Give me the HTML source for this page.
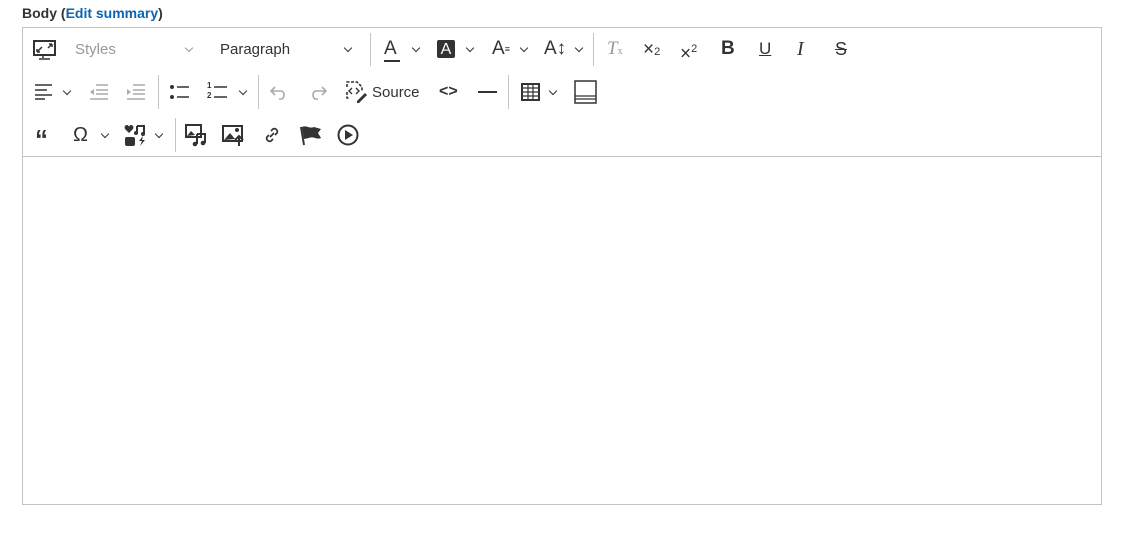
<!DOCTYPE html>
<html><head><style>
body{margin:0;background:#fff;width:1128px;height:534px;position:relative;font-family:"Liberation Sans",sans-serif;overflow:hidden}
.a{position:absolute}
.lbl{left:22px;top:5px;font-size:14px;font-weight:bold;color:#333}
.lbl span{color:#0b64b4}
.box{left:22px;top:27px;width:1078px;height:476px;border:1px solid #c4c4c4}
.tb{left:23px;top:28px;width:1078px;height:128px;border-bottom:1px solid #c4c4c4}
.sep{position:absolute;width:1px;background:#c4c4c4}
.t{position:absolute;font-size:15px;color:#333;line-height:18px}
svg.i{position:absolute}
.chev{position:absolute;width:5px;height:5px;border-right:1.3px solid #333;border-bottom:1.3px solid #333;transform:rotate(45deg)}
</style></head><body>
<div class="a lbl">Body (<span>Edit summary</span>)</div>
<div class="a box"></div>
<div class="a tb"></div>
<div class="sep" style="left:370px;top:33px;height:33px"></div>
<div class="sep" style="left:593px;top:33px;height:33px"></div>
<div class="sep" style="left:158px;top:75px;height:34px"></div>
<div class="sep" style="left:258px;top:75px;height:34px"></div>
<div class="sep" style="left:508px;top:75px;height:34px"></div>
<div class="sep" style="left:175px;top:118px;height:34px"></div>
<!-- row1 -->
<svg class="i" style="left:33px;top:40px" width="24" height="20" viewBox="0 0 24 20"><rect x="1" y="1" width="21" height="14" fill="none" stroke="#333" stroke-width="2"/><path d="M4 12l5-5M4 12v-3M4 12h3M19 4l-4 4M19 4v3M19 4h-3" stroke="#333" stroke-width="1.5" fill="none"/><path d="M10 16v2M6 19h11" stroke="#333" stroke-width="1.5"/></svg>
<div class="t" style="left:75px;top:41px;color:#999;font-size:15px">Styles</div>
<div class="chev" style="left:186px;top:45px;border-color:#999"></div>
<div class="t" style="left:220px;top:41px">Paragraph</div>
<div class="chev" style="left:345px;top:45px"></div>
<div class="t" style="left:384px;top:40px;font-size:19px">A</div><div class="a" style="left:384px;top:60px;width:16px;height:2px;background:#333"></div>
<div class="chev" style="left:413px;top:45px"></div>
<div class="a" style="left:437px;top:40px;width:18px;height:18px;background:#333;border-radius:2px;color:#fff;font-size:16px;text-align:center;line-height:19px">A</div>
<div class="chev" style="left:467px;top:45px"></div>
<div class="t" style="left:492px;top:40px;font-size:19px">A<span style="font-size:9px;vertical-align:top">&#8801;</span></div>
<div class="chev" style="left:521px;top:45px"></div>
<div class="t" style="left:544px;top:40px;font-size:19px">A&#8597;</div>
<div class="chev" style="left:576px;top:45px"></div>
<div class="t" style="left:607px;top:40px;font-size:19px;font-style:italic;font-family:'Liberation Serif';color:#999">T<span style="font-size:10px;font-style:normal">x</span></div>
<div class="t" style="left:643px;top:41px;font-size:19px">&#215;<span style="font-size:11px">2</span></div>
<div class="t" style="left:680px;top:40px;font-size:19px">&#215;<sup style="font-size:11px">2</sup></div>
<div class="t" style="left:721px;top:40px;font-size:19px;font-weight:bold">B</div>
<div class="t" style="left:759px;top:40px;font-size:17px;text-decoration:underline">U</div>
<div class="t" style="left:797px;top:40px;font-size:20px;font-style:italic;font-family:'Liberation Serif'">I</div>
<div class="t" style="left:835px;top:40px;font-size:18px;text-decoration:line-through">S</div>
<!-- row2 -->
<svg class="i" style="left:35px;top:84px" width="18" height="16"><path d="M0 2h17M0 7h12M0 12h17M0 16h10" stroke="#333" stroke-width="1.6" transform="translate(0,-1)"/></svg>
<div class="chev" style="left:64px;top:88px"></div>
<svg class="i" style="left:89px;top:84px" width="20" height="16"><path d="M7 1h12M7 6h12M7 10h12M1 15h18" stroke="#aaa" stroke-width="1.6"/><path d="M5 5l-4 3 4 3" fill="#aaa"/></svg>
<svg class="i" style="left:126px;top:84px" width="20" height="16"><path d="M7 1h12M7 6h12M7 10h12M1 15h18" stroke="#aaa" stroke-width="1.6"/><path d="M1 5l4 3-4 3z" fill="#aaa"/></svg>
<svg class="i" style="left:170px;top:84px" width="20" height="16"><circle cx="2" cy="3" r="2" fill="#333"/><circle cx="2" cy="13" r="2" fill="#333"/><path d="M7 3h12M7 13h12" stroke="#333" stroke-width="1.6"/></svg>
<div class="t" style="left:207px;top:81px;font-size:8px;line-height:10px;font-weight:bold">1<br>2</div>
<svg class="i" style="left:213px;top:84px" width="16" height="16"><path d="M1 3h13M1 13h13" stroke="#333" stroke-width="1.6"/></svg>
<div class="chev" style="left:240px;top:88px"></div>
<svg class="i" style="left:270px;top:84px" width="20" height="16"><path d="M5 3L1 7l4 4M1 7h11a5 5 0 0 1 0 8H9" fill="none" stroke="#aaa" stroke-width="1.6"/></svg>
<svg class="i" style="left:307px;top:84px" width="20" height="16"><path d="M15 3l4 4-4 4M19 7H8a5 5 0 0 0 0 8h3" fill="none" stroke="#aaa" stroke-width="1.6"/></svg>
<svg class="i" style="left:345px;top:80px" width="24" height="24"><path d="M2 7V2h10l5 5v4M2 12v6h3" fill="none" stroke="#333" stroke-width="1.6" stroke-dasharray="3 1.5"/><path d="M7 8l-3 3 3 3M11 8l3 3-3 3" fill="none" stroke="#333" stroke-width="1.4"/><path d="M12 21l8-8 2 2-8 8h-2z" fill="#333"/></svg>
<div class="t" style="left:372px;top:84px;font-size:15px">Source</div>
<div class="t" style="left:439px;top:83px;font-size:16px;font-weight:bold">&lt;&gt;</div>
<div class="a" style="left:478px;top:91px;width:19px;height:2px;background:#333"></div>
<svg class="i" style="left:521px;top:82px" width="20" height="20"><rect x="1" y="2" width="17" height="16" fill="none" stroke="#333" stroke-width="2"/><path d="M1 6h17M1 10h17M1 14h17M7 2v16M12 2v16" stroke="#333" stroke-width="1.2"/></svg>
<div class="chev" style="left:550px;top:88px"></div>
<svg class="i" style="left:574px;top:80px" width="24" height="24"><rect x="1" y="1" width="21" height="22" fill="none" stroke="#333" stroke-width="1.5"/><path d="M1 16h21M1 19h21" stroke="#333" stroke-width="1.2"/></svg>
<!-- row3 -->
<div class="t" style="left:35px;top:126px;font-size:26px;font-weight:bold;line-height:26px">&#8220;</div>
<div class="t" style="left:73px;top:126px;font-size:20px">&#937;</div>
<div class="chev" style="left:102px;top:131px"></div>
<svg class="i" style="left:124px;top:124px" width="26" height="24"><path d="M5 9L1 5c-1-2 0-4 2-4 1 0 2 1 2 2 0-1 1-2 2-2 2 0 3 2 2 4z" fill="#333"/><path d="M13 2h7v8M13 2v7" stroke="#333" stroke-width="2" fill="none"/><circle cx="12" cy="9" r="2" fill="#333"/><circle cx="19" cy="10" r="2" fill="#333"/><rect x="1" y="13" width="10" height="9" rx="2" fill="#333"/><path d="M19 12l-4 5h3l-2 5 5-6h-3z" fill="#333"/></svg>
<div class="chev" style="left:156px;top:131px"></div>
<svg class="i" style="left:185px;top:124px" width="24" height="24"><rect x="1" y="1" width="15" height="12" fill="none" stroke="#333" stroke-width="2"/><path d="M2 12l4-5 4 4" fill="#333"/><path d="M12 10v10M12 10h8v9M20 10" stroke="#333" stroke-width="2" fill="none"/><circle cx="10" cy="20" r="2.3" fill="#333"/><circle cx="18" cy="19" r="2.3" fill="#333"/></svg>
<svg class="i" style="left:222px;top:124px" width="24" height="24"><rect x="1" y="2" width="19" height="15" fill="none" stroke="#333" stroke-width="2"/><path d="M2 16l6-7 5 6z" fill="#333"/><circle cx="15" cy="6" r="2" fill="#333"/><path d="M17 22v-9M13 16l4-4 4 4" stroke="#333" stroke-width="2" fill="none"/></svg>
<svg class="i" style="left:262px;top:125px" width="20" height="20"><path d="M8 12l4-4M9 6l2-2a3 3 0 0 1 4 4l-2 2M11 14l-2 2a3 3 0 0 1-4-4l2-2" stroke="#333" stroke-width="1.7" fill="none"/></svg>
<svg class="i" style="left:299px;top:124px" width="24" height="24"><path d="M2 3l3 18" stroke="#333" stroke-width="2"/><path d="M3 3c5-2 7 2 12 0l7 2-3 4 3 5c-5 2-7-2-12 0l-5 1z" fill="#333"/></svg>
<svg class="i" style="left:337px;top:124px" width="24" height="24"><circle cx="11" cy="11" r="9.5" fill="none" stroke="#333" stroke-width="2"/><path d="M8 6l8 5-8 5z" fill="#333"/></svg>
</body></html>
